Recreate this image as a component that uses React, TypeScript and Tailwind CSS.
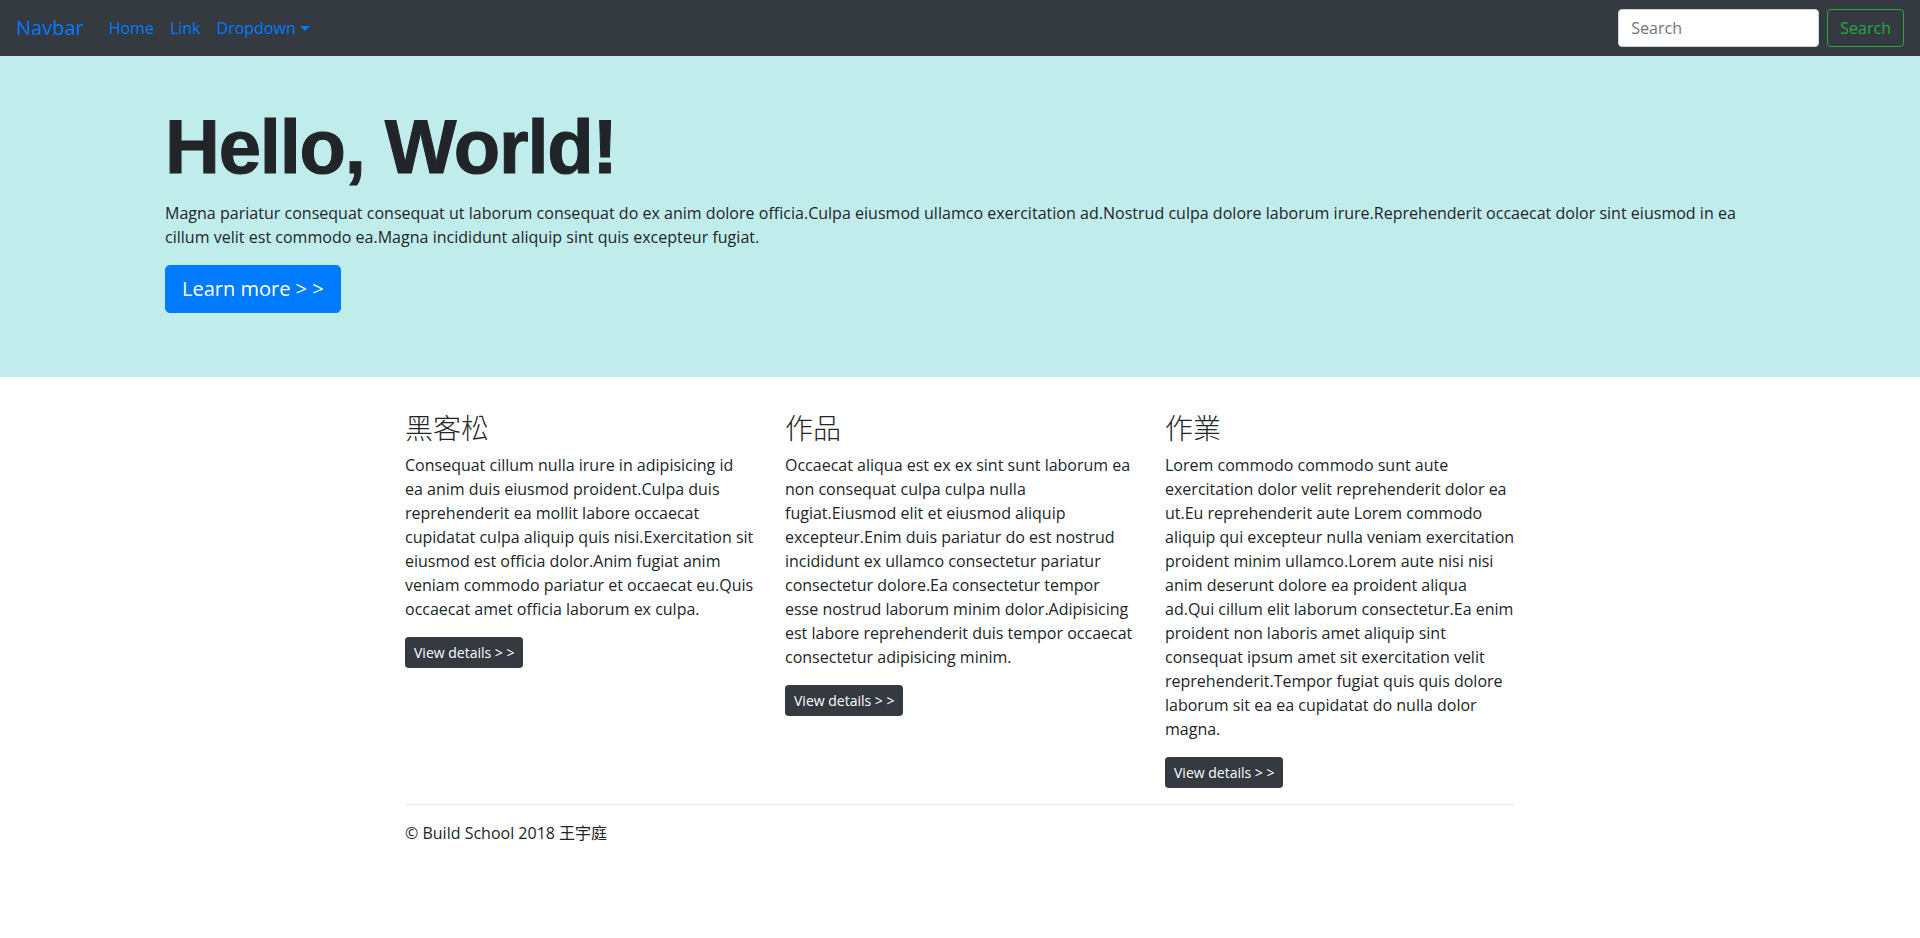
import React from "react";

const cols = [
  {
    title: "黑客松",
    text: "Consequat cillum nulla irure in adipisicing id ea anim duis eiusmod proident.Culpa duis reprehenderit ea mollit labore occaecat cupidatat culpa aliquip quis nisi.Exercitation sit eiusmod est officia dolor.Anim fugiat anim veniam commodo pariatur et occaecat eu.Quis occaecat amet officia laborum ex culpa.",
  },
  {
    title: "作品",
    text: "Occaecat aliqua est ex ex sint sunt laborum ea non consequat culpa culpa nulla fugiat.Eiusmod elit et eiusmod aliquip excepteur.Enim duis pariatur do est nostrud incididunt ex ullamco consectetur pariatur consectetur dolore.Ea consectetur tempor esse nostrud laborum minim dolor.Adipisicing est labore reprehenderit duis tempor occaecat consectetur adipisicing minim.",
  },
  {
    title: "作業",
    text: "Lorem commodo commodo sunt aute exercitation dolor velit reprehenderit dolor ea ut.Eu reprehenderit aute Lorem commodo aliquip qui excepteur nulla veniam exercitation proident minim ullamco.Lorem aute nisi nisi anim deserunt dolore ea proident aliqua ad.Qui cillum elit laborum consectetur.Ea enim proident non laboris amet aliquip sint consequat ipsum amet sit exercitation velit reprehenderit.Tempor fugiat quis quis dolore laborum sit ea ea cupidatat do nulla dolor magna.",
  },
];

export default function App() {
  return (
    <div className="min-h-[938px] bg-white text-[#212529] font-['Open_Sans','Noto_Sans_CJK_TC',sans-serif] text-[16px] leading-[24px]">
      {/* Navbar */}
      <nav className="h-[56px] bg-[#343a40] px-4 flex items-center">
        <a className="text-[20px] leading-[30px] text-[#007bff] mr-4 cursor-pointer">Navbar</a>
        <div className="flex items-center">
          <a className="pl-[9px] pr-2 text-[#007bff] cursor-pointer">Home</a>
          <a className="px-2 text-[#007bff] cursor-pointer">Link</a>
          <a className="px-2 text-[#007bff] cursor-pointer flex items-center">
            Dropdown
            <span className="inline-block ml-[4px] mt-[1px] w-0 h-0 border-t-[5px] border-t-[#007bff] border-x-[5px] border-x-transparent"></span>
          </a>
        </div>
        <div className="ml-auto flex items-center">
          <input
            type="text"
            placeholder="Search"
            className="w-[201px] h-[38px] px-3 bg-white border border-[#ced4da] rounded-[4px] text-[16px] text-[#495057] placeholder:text-[#6c757d] outline-none mr-2"
          />
          <button className="h-[38px] px-3 border border-[#28a745] rounded-[4px] text-[#28a745] text-[16px] bg-transparent">
            Search
          </button>
        </div>
      </nav>

      {/* Jumbotron */}
      <section className="bg-[#c1ecec] px-[165px] pt-[45px] pb-[64px]">
        <h1 className="font-['Liberation_Sans',Arial,sans-serif] font-bold text-[76px] leading-[1.2] tracking-[-1.2px] text-[#212529] mb-[9px] [-webkit-text-stroke:1px_#212529]">
          Hello, World!
        </h1>
        <p className="mb-4 tracking-[0.02px]">
          Magna pariatur consequat consequat ut laborum consequat do ex anim dolore officia.Culpa eiusmod ullamco exercitation ad.Nostrud culpa dolore laborum irure.Reprehenderit occaecat dolor sint eiusmod in ea cillum velit est commodo ea.Magna incididunt aliquip sint quis excepteur fugiat.
        </p>
        <button className="bg-[#007bff] border border-[#007bff] text-white text-[20px] leading-[30px] px-4 py-2 rounded-[4.8px]">
          Learn more &gt; &gt;
        </button>
      </section>

      {/* Content */}
      <main className="w-[1110px] mx-auto mt-[32px]">
        <div className="grid grid-cols-3 gap-[30px] items-start">
          {cols.map((c) => (
            <div key={c.title}>
              <h2 className="font-['Noto_Sans_CJK_TC','Open_Sans',sans-serif] font-light text-[28px] leading-[36px] mb-2 text-[#212529]">
                {c.title}
              </h2>
              <p className="mb-4">{c.text}</p>
              <button className="bg-[#343a40] border border-[#343a40] text-white text-[14px] leading-[21px] px-2 py-1 rounded-[3.2px]">
                View details &gt; &gt;
              </button>
            </div>
          ))}
        </div>
        <hr className="mt-4 mb-4 border-0 border-t border-t-[rgba(0,0,0,0.1)]" />
        <footer>
          <p className="mb-4">© Build School 2018 王宇庭</p>
        </footer>
      </main>
    </div>
  );
}
